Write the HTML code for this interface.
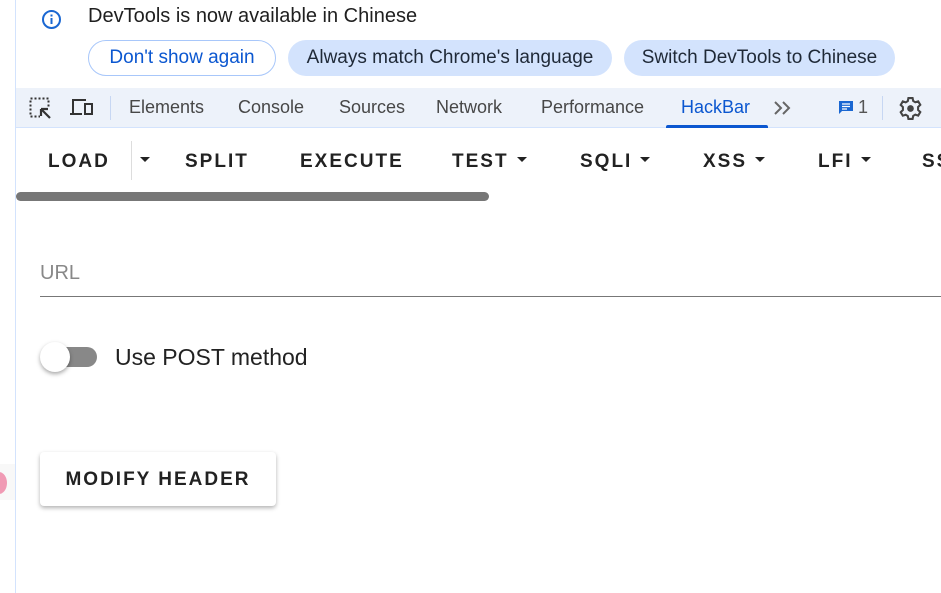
<!DOCTYPE html>
<html><head><meta charset="utf-8"><style>
*{margin:0;padding:0;box-sizing:border-box}
body{width:941px;height:593px;overflow:hidden;background:#fff;font-family:"Liberation Sans",sans-serif;position:relative}
.abs{position:absolute}
.pill{position:absolute;top:40px;height:36px;border-radius:18px;font-size:19px;line-height:36px;text-align:center;color:#1f2937}
.tab{position:absolute;top:97px;font-size:18px;color:#474747}
.hb{position:absolute;top:151px;font-size:19px;font-weight:bold;letter-spacing:2px;color:#222}
.car{display:inline-block;width:0;height:0;border-left:5px solid transparent;border-right:5px solid transparent;border-top:5px solid #222;vertical-align:middle;margin-left:8px;position:relative;top:-2px}
</style></head><body>
<div class="abs" style="left:15px;top:0;width:1px;height:593px;background:#d3e3fd"></div>
<div class="abs" style="left:0;top:464px;width:15px;height:36px;background:#f8f8f8"></div>
<div class="abs" style="left:-9px;top:472px;width:16px;height:22px;border-radius:50%;background:#f09ab4"></div>
<svg class="abs" style="left:41px;top:9px" width="21" height="21" viewBox="0 0 21 21"><circle cx="10.5" cy="10.5" r="8.5" fill="none" stroke="#1a67d2" stroke-width="2"/><rect x="9.5" y="9" width="2" height="6" fill="#1a67d2"/><rect x="9.5" y="5.5" width="2" height="2" fill="#1a67d2"/></svg>
<div class="abs" style="left:88px;top:5px;font-size:20px;color:#1f1f1f">DevTools is now available in Chinese</div>
<div class="pill" style="left:88px;width:188px;border:1px solid #a8c7fa;color:#0b57d0;line-height:34px">Don't show again</div>
<div class="pill" style="left:288px;width:324px;background:#d3e3fd">Always match Chrome's language</div>
<div class="pill" style="left:624px;width:271px;background:#d3e3fd">Switch DevTools to Chinese</div>
<div class="abs" style="left:16px;top:88px;width:925px;height:40px;background:#edf2fa;border-bottom:1px solid #d3e3fd"></div>
<svg class="abs" style="left:29px;top:97px" width="24" height="24" viewBox="0 0 24 24"><rect x="1.5" y="1.5" width="18" height="18" fill="none" stroke="#333" stroke-width="2" stroke-dasharray="2 2"/><rect x="11" y="11" width="12" height="12" fill="#edf2fa"/><path d="M12 12h7M12 12v7M12 12l9 9" stroke="#333" stroke-width="2.2" fill="none"/></svg>
<svg class="abs" style="left:69px;top:97px" width="26" height="22" viewBox="0 0 26 22"><path d="M4 16V3h13" stroke="#333" stroke-width="2" fill="none"/><path d="M1 17h12" stroke="#333" stroke-width="2"/><rect x="16" y="7" width="7" height="10" fill="none" stroke="#333" stroke-width="2"/></svg>
<div class="abs" style="left:110px;top:96px;width:1px;height:24px;background:#c7d7f3"></div>
<div class="tab" style="left:129px">Elements</div>
<div class="tab" style="left:238px">Console</div>
<div class="tab" style="left:339px">Sources</div>
<div class="tab" style="left:436px">Network</div>
<div class="tab" style="left:541px">Performance</div>
<div class="tab" style="left:681px;color:#0b57d0">HackBar</div>
<div class="abs" style="left:666px;top:125px;width:102px;height:3px;background:#0b57d0;border-radius:2px 2px 0 0"></div>
<svg class="abs" style="left:773px;top:99px" width="20" height="18" viewBox="0 0 20 18"><path d="M2 3l6 6-6 6M10 3l6 6-6 6" stroke="#666" stroke-width="2" fill="none"/></svg>
<svg class="abs" style="left:838px;top:100px" width="16" height="16" viewBox="0 0 16 16"><path d="M1 1h14v10H4l-3 3z" fill="#1a67d2"/><path d="M4 4h8M4 6.5h8M4 9h5" stroke="#fff" stroke-width="1.2"/></svg>
<div class="tab" style="left:858px;color:#555">1</div>
<div class="abs" style="left:882px;top:96px;width:1px;height:24px;background:#c7d7f3"></div>
<svg class="abs" style="left:898px;top:96px" width="25" height="25" viewBox="0 0 24 24"><path fill="none" stroke="#444" stroke-width="2" d="M10 2h4l.6 2.8 2 1.2 2.8-.9 2 3.4-2.1 2v2.9l2.1 2-2 3.4-2.8-.9-2 1.2L14 22h-4l-.6-2.8-2-1.2-2.8.9-2-3.4 2.1-2v-2.9l-2.1-2 2-3.4 2.8.9 2-1.2z"/><circle cx="12" cy="12" r="3.2" fill="#444"/></svg>
<div class="hb" style="left:48px">LOAD</div>
<div class="abs" style="left:131px;top:141px;width:1px;height:39px;background:#ddd"></div>
<div class="hb" style="left:132px"><span class="car"></span></div>
<div class="hb" style="left:185px">SPLIT</div>
<div class="hb" style="left:300px">EXECUTE</div>
<div class="hb" style="left:452px">TEST<span class="car"></span></div>
<div class="hb" style="left:580px">SQLI<span class="car"></span></div>
<div class="hb" style="left:703px">XSS<span class="car"></span></div>
<div class="hb" style="left:818px">LFI<span class="car"></span></div>
<div class="hb" style="left:922px">SS</div>
<div class="abs" style="left:16px;top:192px;width:473px;height:9px;border-radius:5px;background:#777"></div>
<div class="abs" style="left:40px;top:262px;font-size:20px;color:#888">URL</div>
<div class="abs" style="left:40px;top:296px;width:901px;height:1px;background:#777"></div>
<div class="abs" style="left:42px;top:347px;width:55px;height:20px;border-radius:10px;background:#888"></div>
<div class="abs" style="left:40px;top:342px;width:30px;height:30px;border-radius:50%;background:#fff;box-shadow:0 2px 4px rgba(0,0,0,.35)"></div>
<div class="abs" style="left:115px;top:344px;font-size:23px;color:#222">Use POST method</div>
<div class="abs" style="left:40px;top:452px;width:236px;height:54px;border-radius:4px;background:#fff;box-shadow:0 2px 4px rgba(0,0,0,.3);font-size:19px;font-weight:bold;letter-spacing:2px;color:#222;text-align:center;line-height:56px">MODIFY HEADER</div>
</body></html>
